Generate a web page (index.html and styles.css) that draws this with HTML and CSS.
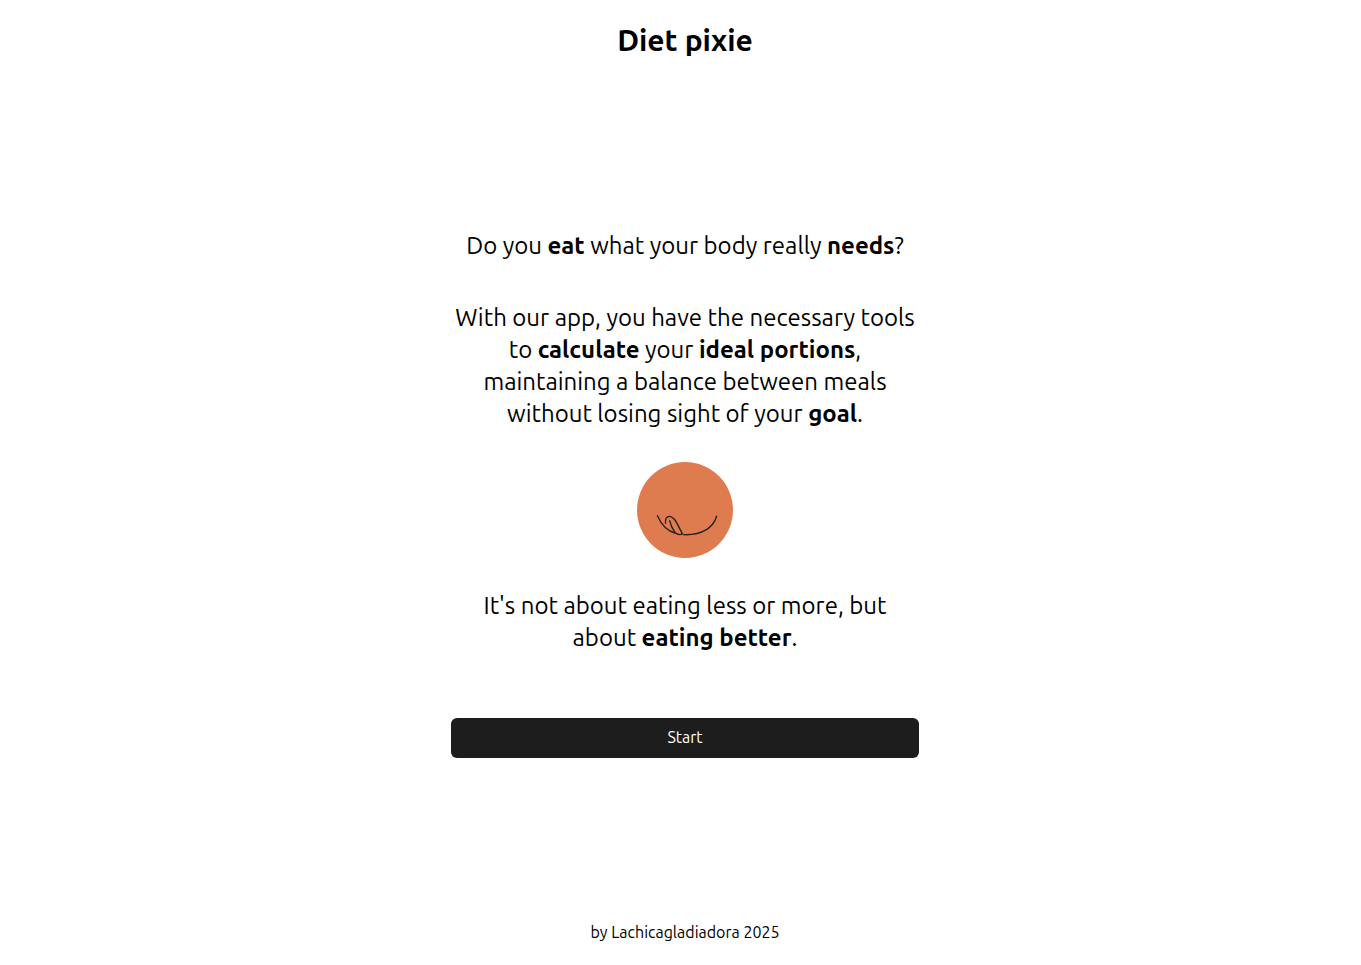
FILE: index.html
```html
<!DOCTYPE html>
<html lang="en">
<head>
<meta charset="utf-8">
<title>Diet pixie</title>
<link rel="stylesheet" href="styles.css">
</head>
<body>
<div class="app">
  <header class="header"><h1 class="title">Diet pixie</h1></header>
  <main class="main">
    <p class="text question">Do you <strong>eat</strong> what your body really <strong>needs</strong>?</p>
    <p class="text">With our app, you have the necessary tools to <strong>calculate</strong> your <strong>ideal portions</strong>, maintaining a balance between meals without losing sight of your <strong>goal</strong>.</p>
    <svg class="logo" viewBox="0 0 96 96" role="img" aria-label="Smiling face">
      <circle cx="48" cy="48" r="48" fill="#de7c50"/>
      <g fill="none" stroke="#2a211c" stroke-width="1.4" stroke-linecap="round" stroke-linejoin="round">
        <path d="M20.400 53.800C24 62 30 69 38.500 71.200C41 72.600 44 73 45.300 71.800"/>
        <path d="M28.500 61.200C28 57 29.500 54.500 32.300 54.400C38 54.500 41 64 45.300 71.600"/>
        <path d="M32.700 58.700C33.500 63 35 66.500 38 70.500"/>
        <path d="M46.500 72.600C61 73.500 76 68 79.600 54.300"/>
      </g>
    </svg>
    <p class="text">It's not about eating less or more, but about <strong>eating better</strong>.</p>
    <button class="start" type="button">Start</button>
  </main>
  <footer class="footer">by Lachicagladiadora 2025</footer>
</div>
</body>
</html>
```
FILE: styles.css
```css
* { box-sizing: border-box; }
body { margin: 0; padding-left: 9px; background: #fff; color: #000; font-family: Ubuntu, "Open Sans", "Noto Sans", sans-serif; font-size: 16px; line-height: 24px; }
.app { min-height: 100vh; max-width: 500px; margin: 0 auto; padding: 0 16px; display: flex; flex-direction: column; }
.header { padding: 20px 0 24px; text-align: center; }
.title { margin: 0; font-size: 30px; line-height: 40px; font-weight: 600; }
.main { flex: 1; display: flex; flex-direction: column; align-items: center; justify-content: center; gap: 32px; }
.text { margin: 0; font-size: 24px; line-height: 32px; font-weight: 400; text-align: center; }
.question { margin-bottom: 8px; }
.text strong { font-weight: 600; }
.logo { width: 96px; height: 96px; }
.start { width: 100%; height: 40px; margin-top: 32px; padding: 0 0 2px; border: 0; border-radius: 6px; background: #1d1d1d; color: #fff; font: inherit; }
.footer { padding: 16px 0 21px; text-align: center; }
```
